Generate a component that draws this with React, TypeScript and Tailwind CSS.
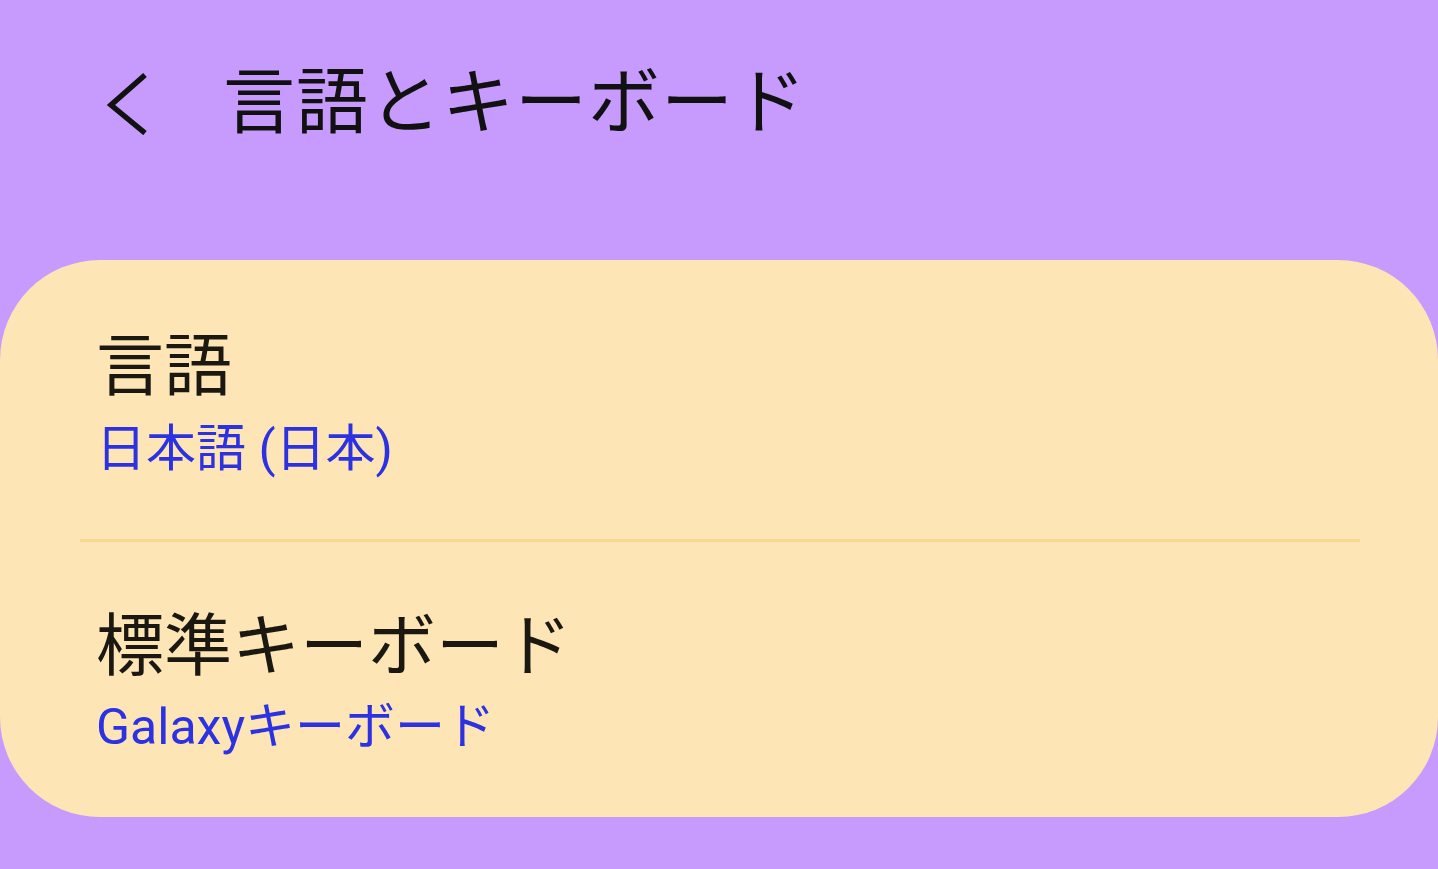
export default function App() {
  const font = "[font-family:Roboto,'Noto_Sans_CJK_JP',sans-serif]";
  return (
    <div className={`h-[869px] w-[1438px] overflow-hidden bg-[#c79bfe] ${font}`}>
      <header className="flex h-[260px] items-start pt-[67px]">
        <div className="flex h-[72px] w-[223px] items-center pl-[103px]">
          <svg width="48" height="64" viewBox="0 0 48 64" fill="none">
            <path d="M42 4 L8 34 L42 62" stroke="#111" strokeWidth="5.5" strokeLinecap="butt" strokeLinejoin="miter" />
          </svg>
        </div>
        <h1 className="text-[72px] leading-[72px] tracking-[1px] font-normal text-[#111]">言語とキーボード</h1>
      </header>

      <section className="h-[557px] rounded-[100px] bg-[#fde5b6]">
        <div className="pl-[96px] pt-[73px] pb-[65px]">
          <div className="text-[68px] leading-[68px] text-[#1a1810]">言語</div>
          <div className="mt-[23px] text-[50px] leading-[50px] text-[#2c32e2]">日本語 (日本)</div>
        </div>
        <div className="ml-[80px] mr-[78px] h-[3px] bg-[#fbd98c]" />
        <div className="pl-[96px] pt-[71px]">
          <div className="text-[68px] leading-[68px] text-[#1a1810]">標準キーボード</div>
          <div className="mt-[21px] text-[50px] leading-[50px] text-[#2c32e2]">Galaxyキーボード</div>
        </div>
      </section>
    </div>
  );
}
